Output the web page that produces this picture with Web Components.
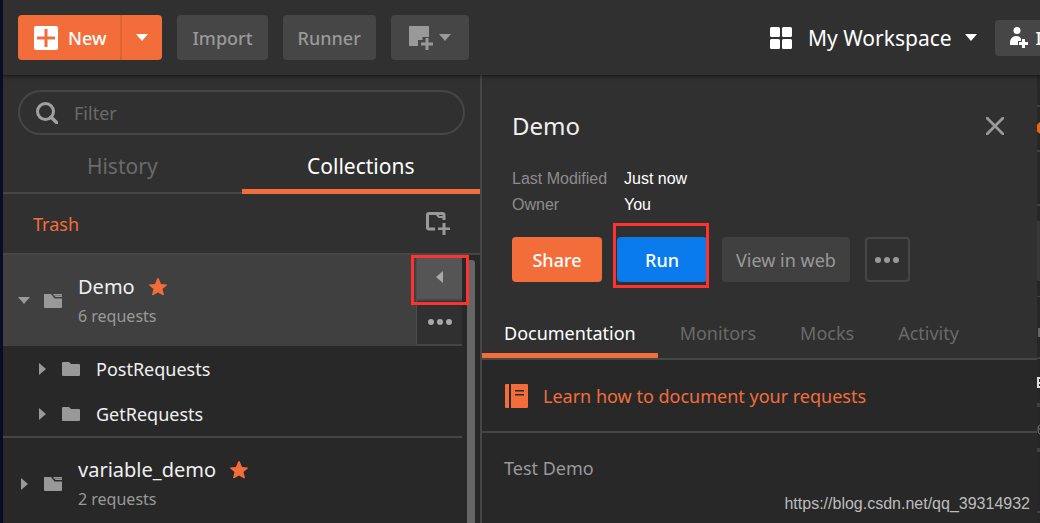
<!DOCTYPE html>
<html lang="en">
<head>
<meta charset="utf-8">
<title>Postman</title>
<style>
    html, body {
        height: 100%;
        margin: 0;
    }

    body {
        --bg: #303030;
        --bg-dark: #282828;
        --bg-button: #464646;
        --line: #464646;
        --orange: #f36d3b;
        --muted: #999999;
        --faint: #6a6a6a;
        --mark: #ff3232;
        background: var(--bg);
        color: #f0f0f0;
        font-family: "Noto Sans", "Open Sans", sans-serif;
        font-size: 18px;
        line-height: 24px;
        overflow: hidden;
    }
</style>
</head>
<body>
<app-window></app-window>

<script>
const icons = {
    plusBox: [24, 24, '<path fill-rule="evenodd" d="M2 0h20a2 2 0 0 1 2 2v20a2 2 0 0 1-2 2H2a2 2 0 0 1-2-2V2a2 2 0 0 1 2-2zM10.500 3v7.500H3v3h7.500V21h3v-7.500H21v-3h-7.500V3z"/>'],
    down: [12, 7, '<path d="M0 0h12L6 7z"/>'],
    right: [7, 12, '<path d="M0 0v12l7-6z"/>'],
    left: [7, 12, '<path d="M7 0v12L0 6z"/>'],
    newWindow: [24, 24, '<path d="M0 0h20v11h-6.500v3H9v6H0z"/><path d="M16.500 12h3v4.500H24v3h-4.500V24h-3v-4.500H12v-3h4.500z"/>'],
    grid: [22, 22, '<rect width="10" height="10" rx="1.500"/><rect x="12" width="10" height="10" rx="1.500"/><rect y="12" width="10" height="10" rx="1.500"/><rect x="12" y="12" width="10" height="10" rx="1.500"/>'],
    invite: [18, 21, '<circle cx="7" cy="3.500" r="3.500"/><path d="M0 18v-2c0-4 2.500-7 6-7 2.500 0 4 .8 5 2.500V14H8v4z"/><path d="M12 12h3v3h3v3h-3v3h-3v-3H9v-3h3z"/>'],
    search: [22, 22, '<circle cx="9.500" cy="9.500" r="8" fill="none" stroke="currentColor" stroke-width="3"/><path d="M15 15l5.500 5.500" stroke="currentColor" stroke-width="3.500" stroke-linecap="round"/>'],
    newFolder: [24, 23, '<path d="M9 17H3q-1.500 0-1.500-1.500V3q0-1.500 1.500-1.500h13.500q1.500 0 1.500 1.500v5" fill="none" stroke="currentColor" stroke-width="3"/><path d="M9 2l3.500 4H19V4h-5.500L12 2z"/><path d="M16.500 11h3v4.500H24v2.500h-4.500v5h-3v-5H12v-2.500h4.500z"/>'],
    star: [18, 18, '<path d="M9 0q.6 0 .9.800L12 6l5.500.4q.9.300.200 1l-4.200 3.600 1.400 5.600q0 1-1 .7L9 14.400l-4.900 2.900q-1 .3-1-.7L4.500 11 .3 7.400q-.7-.7.200-1L6 6 8.100.8Q8.400 0 9 0z"/>'],
    collection: [18, 14, '<path d="M0 0h7l3.500 4.500H18V13q0 1-1 1H1q-1 0-1-1z"/><path d="M9 0h9v3h-6.500z"/><path d="M9.500 1.500H18" stroke="#777" fill="none"/>'],
    folder: [18, 14, '<path d="M1 0h6l2 2h8q1 0 1 1v10q0 1-1 1H1q-1 0-1-1V1q0-1 1-1z"/>'],
    dots: [24, 6, '<circle cx="3" cy="3" r="3"/><circle cx="12" cy="3" r="3"/><circle cx="21" cy="3" r="3"/>'],
    close: [18, 18, '<path d="M1 1l16 16M17 1L1 17" stroke="currentColor" stroke-width="2.800" stroke-linecap="round"/>'],
    book: [24, 24, '<path d="M1 0h3v24H1q-1 0-1-1V1q0-1 1-1z"/><path fill-rule="evenodd" d="M6 0h16q1 0 1 1v22q0 1-1 1H6zM10 6v1.500h9V6zM10 10v1.500h9V10z"/>']
};

class UiIcon extends HTMLElement {
    connectedCallback() {
        const [w, h, shape] = icons[this.getAttribute('name')];
        this.attachShadow({ mode: 'open' });
        this.shadowRoot.innerHTML = `
            <style>
                :host {
                    display: inline-flex;
                    flex: none;
                }
                svg {
                    display: block;
                    fill: currentColor;
                }
            </style>
            <svg width="${w}" height="${h}" viewBox="0 0 ${w} ${h}" aria-hidden="true">${shape}</svg>
        `;
    }
}

class UiButton extends HTMLElement {
    connectedCallback() {
        const label = this.getAttribute('label');
        this.attachShadow({ mode: 'open' });
        this.shadowRoot.innerHTML = `
            <style>
                :host {
                    display: block;
                    flex: none;
                }
                button {
                    display: flex;
                    align-items: center;
                    justify-content: center;
                    gap: 6px;
                    box-sizing: border-box;
                    min-width: var(--button-width, 0);
                    height: var(--button-height, 45px);
                    padding: 0 var(--button-pad, 15px);
                    border: 0;
                    border-radius: 4px;
                    background: var(--bg-button);
                    color: var(--muted);
                    font: inherit;
                    font-weight: 500;
                    white-space: nowrap;
                }
                :host([kind="primary"]) button {
                    background: var(--orange);
                    color: #fff;
                }
                :host([kind="run"]) button {
                    background: #097bed;
                    color: #fff;
                }
                :host([kind="quiet"]) button {
                    padding: 0 14px;
                    background: #404040;
                    font-weight: 400;
                }
                :host([kind="outline"]) button {
                    border: 2px solid var(--line);
                    background: none;
                }
                :host([kind="plain"]) button {
                    background: none;
                }
                :host([kind="light"]) button {
                    gap: 8px;
                    color: #fff;
                }
            </style>
            <button type="button" ${label ? `aria-label="${label}"` : ''}><slot></slot></button>
        `;
    }
}

class NewButton extends HTMLElement {
    connectedCallback() {
        this.attachShadow({ mode: 'open' });
        this.shadowRoot.innerHTML = `
            <style>
                :host {
                    display: flex;
                    height: 45px;
                    border-radius: 4px;
                    overflow: hidden;
                }
                button {
                    display: flex;
                    align-items: center;
                    border: 0;
                    background: var(--orange);
                    color: #fff;
                    font: inherit;
                    font-weight: 500;
                }
                .create {
                    gap: 10px;
                    padding: 0 14px 0 16px;
                }
                .more {
                    padding: 0 14px;
                    border-left: 2px solid #e0622f;
                }
            </style>
            <button type="button" class="create"><ui-icon name="plusBox"></ui-icon>New</button>
            <button type="button" class="more" aria-label="More"><ui-icon name="down"></ui-icon></button>
        `;
    }
}

class AppHeader extends HTMLElement {
    connectedCallback() {
        this.attachShadow({ mode: 'open' });
        this.shadowRoot.innerHTML = `
            <style>
                :host {
                    display: flex;
                    align-items: center;
                    justify-content: space-between;
                    height: 75px;
                    padding-left: 15px;
                    background: var(--bg);
                    box-shadow: 0 1px 4px rgba(0, 0, 0, 0.6);
                    z-index: 1;
                    overflow-x: clip;
                }
                .group {
                    display: flex;
                    align-items: center;
                    gap: 15px;
                }
                .window {
                    --button-width: 78px;
                }
                .workspace {
                    display: flex;
                    align-items: center;
                    gap: 16px;
                    padding: 0;
                    border: 0;
                    background: none;
                    color: #fff;
                    font: inherit;
                    font-size: 21px;
                    white-space: nowrap;
                }
                .right {
                    width: 270px;
                    gap: 18px;
                }
                .workspace ui-icon:last-child {
                    margin-left: -3px;
                }
                .invite {
                    --button-height: 36px;
                }
            </style>
            <div class="group">
                <new-button></new-button>
                <ui-button>Import</ui-button>
                <ui-button>Runner</ui-button>
                <ui-button class="window" label="New window"><ui-icon name="newWindow"></ui-icon><ui-icon name="down"></ui-icon></ui-button>
            </div>
            <div class="group right">
                <button type="button" class="workspace"><ui-icon name="grid"></ui-icon>My Workspace<ui-icon name="down"></ui-icon></button>
                <ui-button class="invite" kind="light"><ui-icon name="invite"></ui-icon>Invite</ui-button>
            </div>
        `;
    }
}

class SearchField extends HTMLElement {
    connectedCallback() {
        this.attachShadow({ mode: 'open' });
        this.shadowRoot.innerHTML = `
            <style>
                :host {
                    display: block;
                    margin: 15px 15px 0;
                }
                label {
                    display: flex;
                    align-items: center;
                    gap: 16px;
                    box-sizing: border-box;
                    height: 45px;
                    padding: 0 16px;
                    border: 2px solid var(--line);
                    border-radius: 23px;
                    color: #a0a0a0;
                }
                input {
                    flex: 1;
                    min-width: 0;
                    padding: 0;
                    border: 0;
                    outline: 0;
                    background: none;
                    color: #f0f0f0;
                    font: inherit;
                }
                input::placeholder {
                    color: var(--faint);
                }
            </style>
            <label><ui-icon name="search"></ui-icon><input type="text" placeholder="Filter" aria-label="Filter"></label>
        `;
    }
}

class TabItem extends HTMLElement {
    connectedCallback() {
        this.attachShadow({ mode: 'open' });
        this.shadowRoot.innerHTML = `
            <style>
                :host {
                    display: flex;
                    flex: var(--tab-flex, none);
                }
                button {
                    flex: 1;
                    box-sizing: border-box;
                    height: var(--tab-height);
                    padding: var(--tab-padding);
                    border: 0;
                    border-bottom: 5px solid transparent;
                    background: none;
                    color: var(--faint);
                    font: inherit;
                }
                :host([active]) button {
                    border-bottom-color: var(--orange);
                    color: #fff;
                }
            </style>
            <button type="button"><slot></slot></button>
        `;
    }
}

class FolderRow extends HTMLElement {
    connectedCallback() {
        this.attachShadow({ mode: 'open' });
        this.shadowRoot.innerHTML = `
            <style>
                :host {
                    display: flex;
                    align-items: center;
                    gap: 16px;
                    height: 45px;
                    padding-left: 36px;
                }
                ui-icon {
                    color: var(--muted);
                }
            </style>
            <ui-icon name="right"></ui-icon>
            <ui-icon name="folder"></ui-icon>
            <span><slot></slot></span>
        `;
    }
}

class CollectionItem extends HTMLElement {
    connectedCallback() {
        const open = this.hasAttribute('open');
        this.attachShadow({ mode: 'open' });
        this.shadowRoot.innerHTML = `
            <style>
                :host {
                    display: block;
                    border-bottom: 2px solid var(--line);
                }
                .head {
                    display: flex;
                    height: 91px;
                }
                :host([open]) .head {
                    background: #404040;
                }
                .main {
                    flex: 1;
                    display: flex;
                    align-items: center;
                    padding-left: 15px;
                    color: var(--muted);
                }
                .caret {
                    display: flex;
                    justify-content: center;
                    width: 12px;
                    margin-right: 14px;
                }
                .text {
                    margin-left: 16px;
                }
                .name {
                    display: flex;
                    align-items: center;
                    gap: 14px;
                    height: 32px;
                    color: #f0f0f0;
                    font-size: 20px;
                }
                .name ui-icon {
                    color: var(--orange);
                }
                .count {
                    display: block;
                    height: 28px;
                    font-size: 16px;
                    line-height: 26px;
                }
                .actions {
                    position: relative;
                    display: flex;
                    flex-direction: column;
                    box-sizing: border-box;
                    width: 46px;
                    border-left: 1px solid #4c4c4c;
                    border-bottom: 2px solid var(--line);
                    background: var(--bg);
                }
                .actions button {
                    flex: 1;
                    display: flex;
                    align-items: center;
                    justify-content: center;
                    border: 0;
                    padding: 0;
                    background: none;
                    color: #a8a8a8;
                }
                .actions button:first-child {
                    border-bottom: 2px solid var(--line);
                    background: #555;
                }
                .mark {
                    position: absolute;
                    inset: 0 -7px 39px -6px;
                    border: 3px solid var(--mark);
                }
            </style>
            <div class="head">
                <div class="main">
                    <span class="caret"><ui-icon name="${open ? 'down' : 'right'}"></ui-icon></span>
                    <ui-icon name="collection"></ui-icon>
                    <div class="text">
                        <div class="name">${this.getAttribute('name')}<ui-icon name="star"></ui-icon></div>
                        <span class="count">${this.getAttribute('count')} requests</span>
                    </div>
                </div>
                ${open ? `
                <div class="actions">
                    <button type="button" aria-label="Hide details"><ui-icon name="left"></ui-icon></button>
                    <button type="button" aria-label="More"><ui-icon name="dots"></ui-icon></button>
                    <div class="mark"></div>
                </div>` : ''}
            </div>
            <slot></slot>
        `;
    }
}

class SideBar extends HTMLElement {
    connectedCallback() {
        this.attachShadow({ mode: 'open' });
        this.shadowRoot.innerHTML = `
            <style>
                :host {
                    display: flex;
                    flex-direction: column;
                    background: var(--bg);
                    border-right: 2px solid var(--line);
                    min-height: 0;
                }
                .tabs {
                    --tab-flex: 1;
                    --tab-height: 59px;
                    --tab-padding: 8px 0 0;
                    display: flex;
                    font-size: 21px;
                    box-shadow: inset 0 -2px var(--line);
                }
                .tools {
                    display: flex;
                    align-items: center;
                    justify-content: space-between;
                    height: 59px;
                    padding: 0 30px;
                    border-bottom: 2px solid var(--line);
                }
                .tools a {
                    color: var(--orange);
                    text-decoration: none;
                }
                .tools ui-button {
                    --button-pad: 0;
                }
                .scroller {
                    flex: 1;
                    display: flex;
                    min-height: 0;
                    background: var(--bg-dark);
                    overflow: hidden;
                }
                .list {
                    flex: 1;
                }
                .bar {
                    width: 8px;
                    margin: 5px 5px 0;
                    border-radius: 3px 3px 0 0;
                    background: #666;
                }
            </style>
            <search-field></search-field>
            <div class="tabs">
                <tab-item>History</tab-item>
                <tab-item active>Collections</tab-item>
            </div>
            <div class="tools">
                <a href="#">Trash</a>
                <ui-button kind="plain" label="New collection"><ui-icon name="newFolder"></ui-icon></ui-button>
            </div>
            <div class="scroller">
                <div class="list">
                    <collection-item name="Demo" count="6" open>
                        <folder-row>PostRequests</folder-row>
                        <folder-row>GetRequests</folder-row>
                    </collection-item>
                    <collection-item name="variable_demo" count="2"></collection-item>
                </div>
                <div class="bar"></div>
            </div>
        `;
    }
}

class DetailPanel extends HTMLElement {
    connectedCallback() {
        this.attachShadow({ mode: 'open' });
        this.shadowRoot.innerHTML = `
            <style>
                :host {
                    display: flex;
                    flex-direction: column;
                    min-width: 0;
                    background: var(--bg-dark);
                }
                .top {
                    padding: 35px 30px 0;
                    background: var(--bg);
                }
                header {
                    display: flex;
                    align-items: center;
                    justify-content: space-between;
                    height: 32px;
                }
                h1 {
                    margin: 0;
                    font-size: 24px;
                    font-weight: 400;
                }
                header ui-button {
                    --button-pad: 3px;
                }
                dl {
                    display: grid;
                    grid-template-columns: 112px 1fr;
                    margin: 24px 0 19px;
                    font: 16px/26px "Liberation Sans", Arial, sans-serif;
                }
                dt {
                    color: #8c8c8c;
                }
                dd {
                    margin: 0;
                    color: #fff;
                }
                .buttons {
                    --button-width: 90px;
                    display: flex;
                    gap: 15px;
                }
                .run {
                    position: relative;
                }
                .mark {
                    position: absolute;
                    inset: -14px -2px -6px -4px;
                    border: 3px solid var(--mark);
                }
                .more {
                    --button-width: 45px;
                    --button-pad: 0;
                }
                .tabs {
                    --tab-height: 57px;
                    --tab-padding: 12px 22px 0;
                    display: flex;
                    padding-top: 19px;
                    background: var(--bg);
                    border-bottom: 2px solid var(--line);
                }
                .learn {
                    display: flex;
                    align-items: center;
                    gap: 14px;
                    height: 71px;
                    padding: 0 23px;
                    border-bottom: 2px solid var(--line);
                    color: var(--orange);
                    text-decoration: none;
                }
                p {
                    margin: 23px 22px;
                    color: var(--muted);
                }
            </style>
            <div class="top">
                <header>
                    <h1>Demo</h1>
                    <ui-button kind="plain" label="Close"><ui-icon name="close"></ui-icon></ui-button>
                </header>
                <dl>
                    <dt>Last Modified</dt><dd>Just now</dd>
                    <dt>Owner</dt><dd>You</dd>
                </dl>
                <div class="buttons">
                    <ui-button kind="primary">Share</ui-button>
                    <div class="run"><ui-button kind="run">Run</ui-button><div class="mark"></div></div>
                    <ui-button kind="quiet">View in web</ui-button>
                    <ui-button class="more" kind="outline" label="More"><ui-icon name="dots"></ui-icon></ui-button>
                </div>
            </div>
            <div class="tabs">
                <tab-item active>Documentation</tab-item>
                <tab-item>Monitors</tab-item>
                <tab-item>Mocks</tab-item>
                <tab-item>Activity</tab-item>
            </div>
            <a class="learn" href="#"><ui-icon name="book"></ui-icon>Learn how to document your requests</a>
            <p>Test Demo</p>
        `;
    }
}

// the builder behind the detail panel, only its edge shows
class BuilderEdge extends HTMLElement {
    connectedCallback() {
        this.attachShadow({ mode: 'open' });
        this.shadowRoot.innerHTML = `
            <style>
                :host {
                    display: block;
                    overflow: hidden;
                    background: #262626;
                }
                svg {
                    display: block;
                }
            </style>
            <svg width="3" height="448" aria-hidden="true">
                <path d="M0 30h3v2H0zM0 75h3v2H0zM0 129h3v2H0zM0 221h3v1H0zM0 282h3v2H0zM0 328h3v4H0zM0 373h3v4H0zM0 436h3v2H0z" fill="#404040"/>
                <path d="M0 146h3v60H0z" fill="#383838"/>
                <circle cx="5" cy="53" r="6" fill="#e8641b"/>
                <path d="M1 253h2v9H1z" fill="#666"/>
                <path d="M0 302h3v2H2v3h1v2H2v2h1v2H0z" fill="#ddd"/>
                <path d="M3 350q-2 0-2 4.500t2 4.500M1 354h2" stroke="#777" fill="none"/>
            </svg>
        `;
    }
}

class AppWindow extends HTMLElement {
    connectedCallback() {
        this.attachShadow({ mode: 'open' });
        this.shadowRoot.innerHTML = `
            <style>
                :host {
                    position: relative;
                    display: flex;
                    flex-direction: column;
                    box-sizing: border-box;
                    height: 100vh;
                    border-left: 3px solid #070d25;
                    overflow: hidden;
                }
                app-header {
                    flex: none;
                }
                main {
                    flex: 1;
                    display: grid;
                    grid-template-columns: 479px 1fr 3px;
                    min-height: 0;
                }
                .url {
                    position: absolute;
                    right: 10px;
                    bottom: 8px;
                    color: #bdbdbd;
                    font: 16px/22px "Liberation Sans", Arial, sans-serif;
                }
            </style>
            <app-header></app-header>
            <main>
                <side-bar></side-bar>
                <detail-panel></detail-panel>
                <builder-edge></builder-edge>
            </main>
            <span class="url">https://blog.csdn.net/qq_39314932</span>
        `;
    }
}

customElements.define('ui-icon', UiIcon);
customElements.define('ui-button', UiButton);
customElements.define('new-button', NewButton);
customElements.define('app-header', AppHeader);
customElements.define('search-field', SearchField);
customElements.define('tab-item', TabItem);
customElements.define('folder-row', FolderRow);
customElements.define('collection-item', CollectionItem);
customElements.define('side-bar', SideBar);
customElements.define('detail-panel', DetailPanel);
customElements.define('builder-edge', BuilderEdge);
customElements.define('app-window', AppWindow);
</script>
</body>
</html>
